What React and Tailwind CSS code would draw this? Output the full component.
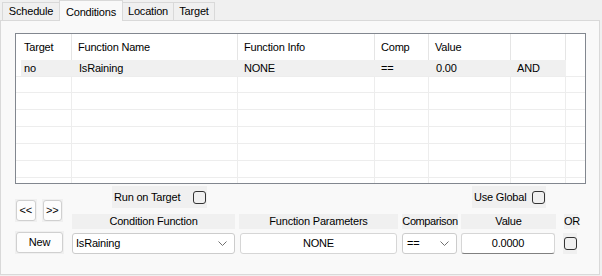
import React from "react";

const Chevron = () => (
  <svg width="9" height="5" viewBox="0 0 9 5" className="shrink-0">
    <polyline points="0.5,0.5 4.5,4.5 8.5,0.5" fill="none" stroke="#707070" strokeWidth="1" />
  </svg>
);

const Check = () => (
  <div className="w-[13px] h-[13px] border border-[#333333] rounded-[3px] bg-transparent shrink-0" />
);

const Btn = ({ children, className }) => (
  <div className={"bg-[#f0f0f0] p-px " + (className || "")}>
    <div className="h-full w-full bg-[#fdfdfd] border border-[#d0d0d0] rounded-[3px] flex items-center justify-center">
      {children}
    </div>
  </div>
);

export default function App() {
  const rows = [0, 1, 2, 3, 4, 5];
  return (
    <div
      className="w-[602px] h-[276px] bg-[#f0f0f0] text-black text-[11px] tracking-[-0.2px] overflow-hidden"
      style={{ fontFamily: '"Liberation Sans", Arial, sans-serif' }}
    >
      {/* Tabs */}
      <div className="h-[20px] flex items-end pl-[2px]">
        <div className="h-[18px] w-[57px] border-l border-t border-[#d9d9d9] bg-[#f0f0f0] flex items-center justify-center">
          Schedule
        </div>
        <div className="relative z-10 h-[21px] w-[64px] -mb-px border-x border-t border-[#d9d9d9] bg-[#f9f9f9] flex items-start pt-[3px] justify-center">
          Conditions
        </div>
        <div className="h-[18px] w-[51px] border-r border-t border-[#d9d9d9] bg-[#f0f0f0] flex items-center justify-center">
          Location
        </div>
        <div className="h-[18px] w-[41px] border-r border-t border-[#d9d9d9] bg-[#f0f0f0] flex items-center justify-center">
          Target
        </div>
      </div>

      {/* Panel */}
      <div className="w-[600px] h-[255px] border border-[#d9d9d9] bg-[#f9f9f9]">
        {/* Grid */}
        <div className="ml-[14px] mt-[12px] w-[571px] h-[151px] border border-[#82878f] bg-white overflow-hidden">
          <div className="grid grid-cols-[56px_166px_137px_54px_82px_55px_1fr] h-[26px]">
            <div className="border-r border-[#e5e5e5] pl-[8px] flex items-center">Target</div>
            <div className="border-r border-[#e5e5e5] pl-[6px] flex items-center">Function Name</div>
            <div className="border-r border-[#e5e5e5] pl-[6px] flex items-center">Function Info</div>
            <div className="border-r border-[#e5e5e5] pl-[6px] flex items-center">Comp</div>
            <div className="border-r border-[#e5e5e5] pl-[6px] flex items-center">Value</div>
            <div className="border-r border-[#e5e5e5]"></div>
            <div></div>
          </div>
          <div className="flex h-[16px]">
            <div className="w-[5px] bg-white"></div>
            <div className="grid grid-cols-[51px_166px_137px_54px_82px_55px] bg-[#f0f0f0] leading-[16px]">
              <div className="pl-[3px]">no</div>
              <div className="pl-[7px]">IsRaining</div>
              <div className="pl-[6px]">NONE</div>
              <div className="pl-[6px]">==</div>
              <div className="pl-[7px]">0.00</div>
              <div className="pl-[6px]">AND</div>
            </div>
          </div>
          {rows.map((r) => (
            <div
              key={r}
              className={
                "grid grid-cols-[56px_166px_137px_54px_82px_55px_1fr] border-t border-[#ededed] " +
                (r === 0 ? "h-[16px]" : "h-[17px]")
              }
            >
              <div className="border-r border-[#ededed]"></div>
              <div className="border-r border-[#ededed]"></div>
              <div className="border-r border-[#ededed]"></div>
              <div className="border-r border-[#ededed]"></div>
              <div className="border-r border-[#ededed]"></div>
              <div className="border-r border-[#ededed]"></div>
              <div></div>
            </div>
          ))}
          <div className="h-[17px] border-t border-[#ededed] grid grid-cols-[56px_166px_137px_54px_82px_55px_1fr]">
            <div className="border-r border-[#ededed]"></div>
            <div className="border-r border-[#ededed]"></div>
            <div className="border-r border-[#ededed]"></div>
            <div className="border-r border-[#ededed]"></div>
            <div className="border-r border-[#ededed]"></div>
            <div className="border-r border-[#ededed]"></div>
            <div></div>
          </div>
        </div>

        {/* Bottom controls */}
        <div className="flex mt-[2px] ml-[14px]">
          <div className="w-[48px] flex flex-col">
            <div className="mt-[13px] flex gap-[5px]">
              <Btn className="w-[22px] h-[23px]">&lt;&lt;</Btn>
              <Btn className="w-[22px] h-[23px]">&gt;&gt;</Btn>
            </div>
            <Btn className="mt-[9px] w-[49px] h-[23px]">New</Btn>
          </div>

          <div className="ml-[9px] flex flex-col">
            <div className="flex h-[22px]">
              <div className="ml-[40px] w-[95px] bg-[#f0f0f0] flex items-center pl-[2px] pr-[1px]">
                <span>Run on Target</span>
                <div className="ml-auto"><Check /></div>
              </div>
              <div className="ml-[265px] w-[74px] bg-[#f0f0f0] flex items-center pl-[2px] pr-[1px]">
                <span>Use Global</span>
                <div className="ml-auto"><Check /></div>
              </div>
            </div>

            <div className="flex mt-[6px] h-[15px] leading-[15px]">
              <div className="w-[163px] bg-[#f0f0f0] text-center">Condition Function</div>
              <div className="ml-[4px] w-[159px] bg-[#f0f0f0] text-center">Function Parameters</div>
              <div className="ml-[4px] w-[56px] bg-[#f0f0f0] text-center tracking-[-0.4px]">Comparison</div>
              <div className="ml-[3px] w-[95px] bg-[#f0f0f0] text-center">Value</div>
              <div className="ml-[8px] w-[14px] bg-[#f0f0f0] text-left">OR</div>
            </div>

            <div className="flex mt-[4px] h-[21px]">
              <div className="w-[163px] bg-white border border-[#cccccc] rounded-[3px] flex items-center pl-[3px] pr-[7px]">
                <span>IsRaining</span>
                <div className="ml-auto"><Chevron /></div>
              </div>
              <div className="ml-[5px] w-[157px] bg-white border border-[#d6d6d6] rounded-[3px] flex items-center justify-center">
                NONE
              </div>
              <div className="ml-[5px] w-[55px] bg-white border border-[#cccccc] rounded-[3px] flex items-center pl-[4px] pr-[7px]">
                <span>==</span>
                <div className="ml-auto"><Chevron /></div>
              </div>
              <div className="ml-[4px] w-[94px] bg-white border border-[#d6d6d6] border-b-[#808080] rounded-[3px] flex items-center justify-center">
                0.0000
              </div>
              <div className="ml-[8px] w-[14px] bg-[#f0f0f0] flex items-center justify-center">
                <Check />
              </div>
            </div>
          </div>
        </div>
      </div>
    </div>
  );
}
